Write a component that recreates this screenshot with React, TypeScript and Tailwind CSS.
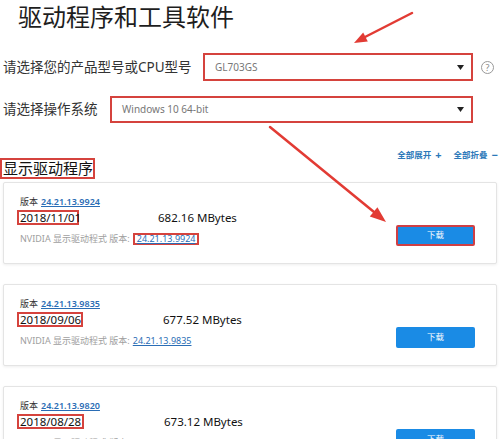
import React from "react";

const font = "font-['Noto_Sans','Noto_Sans_CJK_SC',sans-serif]";

function Caret() {
  return (
    <svg width="7" height="5" viewBox="0 0 7 5" className="shrink-0">
      <polygon points="0,0 7,0 3.5,5" fill="#222" />
    </svg>
  );
}

type Item = {
  ver: string;
  date: string;
  size: string;
  dateW: string;
  colW: string;
  boxed?: boolean;
};

const items: Item[] = [
  { ver: "24.21.13.9924", date: "2018/11/01", size: "682.16 MBytes", dateW: "w-[62px]", colW: "w-[141px]", boxed: true },
  { ver: "24.21.13.9835", date: "2018/09/06", size: "677.52 MBytes", dateW: "w-[66px]", colW: "w-[146px]" },
  { ver: "24.21.13.9820", date: "2018/08/28", size: "673.12 MBytes", dateW: "w-[67px]", colW: "w-[147px]" },
];

function Card({ it }: { it: Item }) {
  return (
    <div className="ml-[3px] w-[494px] h-[82px] shrink-0 flex items-start border border-[#e4e4e4] rounded-[2px] shadow-[0_1px_3px_rgba(0,0,0,0.07)] bg-white">
      <div className="flex-1 pl-[13px] pt-[14px] flex flex-col">
        <div className="h-[10px] leading-[10px] text-[9px] text-[#333] pl-[3px] flex items-center">
          <span>版本</span>
          <span className="ml-[3px] text-[#2a6db5] underline font-semibold">{it.ver}</span>
        </div>
        <div className="mt-[3px] flex items-center h-[15px]">
          <div className={`${it.colW} shrink-0`}>
            <div className={`${it.dateW} h-[15px] border-2 border-[#d5433d] pl-[1px] flex items-center text-[11.5px] leading-[11px] text-[#111]`}>
              {it.date}
            </div>
          </div>
          <div className="text-[11.5px] leading-[11px] text-[#111]">{it.size}</div>
        </div>
        <div className="mt-[8px] h-[12px] flex items-center text-[9px] text-[#a0a0a0] pl-[3px]">
          <span>NVIDIA 显示驱动程式 版本:</span>
          <span
            className={`ml-[3px] text-[#2a6db5] underline ${
              it.boxed ? "border-2 border-[#d5433d] px-[2px] h-[12px] leading-[8px] flex items-center" : ""
            }`}
          >
            {it.ver}
          </span>
        </div>
      </div>
      <div
        className={`mt-[42px] mr-[21px] w-[79px] h-[21px] rounded-[2px] bg-[#1a8be5] text-white text-[8.5px] flex items-center justify-center ${
          it.boxed ? "border-2 border-[#cf3f44]" : ""
        }`}
      >
        下载
      </div>
    </div>
  );
}

export default function App() {
  return (
    <div className={`relative w-[500px] h-[439px] overflow-hidden bg-white ${font}`}>
      <div className="flex flex-col">
        <div className="pl-[18px] pt-[5px] h-[36px] text-[24px] leading-[24px] text-[#1e1e1e]">
          驱动程序和工具软件
        </div>
        <div className="mt-[17px] flex items-center h-[28px]">
          <div className="w-[203px] pl-[3px] text-[13.5px] text-[#333]">请选择您的产品型号或CPU型号</div>
          <div className="w-[270px] h-[28px] border-2 border-[#d5433d] flex items-center justify-between pl-[10px] pr-[7px]">
            <span className="text-[10px] text-[#777]">GL703GS</span>
            <Caret />
          </div>
          <div className="ml-[8px] w-[13px] h-[13px] rounded-full border border-[#999] text-[#888] text-[9px] leading-[11px] flex items-center justify-center">
            ?
          </div>
        </div>
        <div className="mt-[15px] flex items-center h-[27px]">
          <div className="w-[110px] pl-[3px] text-[13.5px] text-[#333]">请选择操作系统</div>
          <div className="w-[363px] h-[27px] border-2 border-[#d5433d] flex items-center justify-between pl-[10px] pr-[7px]">
            <span className="text-[10px] text-[#777]">Windows 10 64-bit</span>
            <Caret />
          </div>
        </div>
        <div className="mt-[27px] flex items-start justify-between h-[29px]">
          <div className="mt-[8px] w-[95px] h-[21px] border-2 border-[#d5433d] flex items-center pl-[1px] text-[15px] leading-[15px] text-[#111]">
            显示驱动程序
          </div>
          <div className="flex items-center h-[10px] text-[8.5px] font-bold text-[#2b78b9] pr-[2px]">
            <span>全部展开</span>
            <span className="ml-[4px] text-[11px] leading-[10px]">+</span>
            <span className="ml-[12px]">全部折叠</span>
            <span className="ml-[4px] text-[11px] leading-[10px]">−</span>
          </div>
        </div>
        <div className="mt-[3px] flex flex-col gap-[20px]">
          {items.map((it) => (
            <Card key={it.ver} it={it} />
          ))}
        </div>
      </div>
      <svg className="absolute left-0 top-0 pointer-events-none" width="500" height="439">
        <line x1="412" y1="13" x2="365" y2="37" stroke="#e23b34" strokeWidth="2.5" strokeLinecap="round" />
        <polygon points="354,43 367.8,41.4 363.2,32.6" fill="#e23b34" />
        <line x1="270" y1="127" x2="374" y2="212" stroke="#e23b34" strokeWidth="2.5" strokeLinecap="round" />
        <polygon points="386,222 369.8,216.5 377.4,207.3" fill="#e23b34" />
      </svg>
    </div>
  );
}
